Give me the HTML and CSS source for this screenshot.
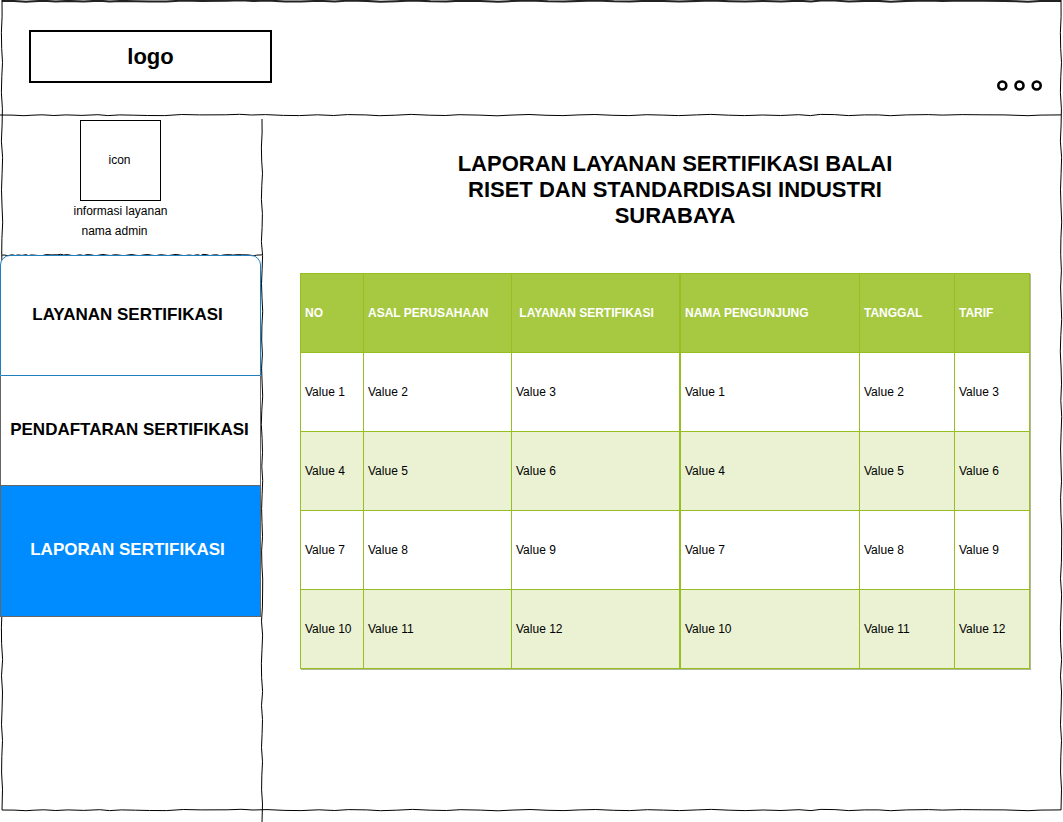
FILE: index.html
```
<!DOCTYPE html>
<html lang="id">
<head>
<meta charset="utf-8">
<meta name="viewport" content="width=device-width, initial-scale=1">
<title>Laporan Sertifikasi</title>
<link rel="stylesheet" href="styles.css">
</head>
<body>
<svg class="defs" aria-hidden="true">
  <symbol id="line-h" viewBox="0 0 1063 4" preserveAspectRatio="none">
    <path vector-effect="non-scaling-stroke" d="M0 2 12 2.1 24 2.7 32 2.2 42 1.8 54 2.5 66 1.9 82 2.4 98 1.7 108 2.6 120 1.9 134 2.2 148 2.5 165 2.6 182 1.5 200 1.9 226 1.8 240 1.3 252 2 266 1.6 284 2.4 300 2.6 318 1.8 334 2.5 348 1.6 366 1.9 380 2.7 396 2.2 412 1.4 430 2.2 446 2.5 460 1.7 480 2.1 498 2.8 512 2.1 530 1.5 548 2.3 564 2.6 580 1.9 596 1.5 614 2.3 630 2.6 648 1.7 664 2.1 680 2.6 698 1.9 712 1.4 730 2.2 746 2.6 764 2 782 2.5 800 1.7 812 2.6 822 1.4 836 1.6 850 2.6 866 1.9 880 1.9 892 2.7 908 1.9 930 1.6 944 2.1 964 1.6 984 1.8 1006 1.9 1030 2.7 1042 2.1 1063 1.9"/>
  </symbol>
  <symbol id="line-v" viewBox="0 0 4 700" preserveAspectRatio="none">
    <path vector-effect="non-scaling-stroke" d="M2 0 2.1 14 1.4 28 1.7 42 2.5 54 1.8 66 1.4 80 2.4 94 2.1 108 1.4 122 2.6 136 2.1 150 1.5 164 2 178 2.7 192 1.9 206 1.7 220 2.4 234 1.6 248 2.1 262 2.7 276 1.8 290 1.3 304 2.1 318 2.5 332 1.8 346 2.7 360 2.1 374 1.6 388 2 402 2.5 416 1.6 430 1.9 444 2.7 458 2.6 472 2.4 486 1.5 500 2.6 514 2 528 1.4 542 1.6 556 2.6 570 1.5 584 2.5 598 2.1 612 1.5 626 2.5 640 1.8 654 1.6 668 2.5 682 2 700"/>
  </symbol>
</svg>

<div class="page">
  <svg class="line line-top" aria-hidden="true"><use href="#line-h"/></svg>
  <svg class="line line-left" aria-hidden="true"><use href="#line-v"/></svg>
  <svg class="line line-right" aria-hidden="true"><use href="#line-v"/></svg>
  <svg class="line line-bottom" aria-hidden="true"><use href="#line-h"/></svg>

  <header class="header">
    <div class="logo">logo</div>
    <button class="more" type="button" aria-label="Menu">
      <svg width="46" height="12" viewBox="0 0 46 12" aria-hidden="true">
        <circle cx="5.3" cy="5.5" r="4"/>
        <circle cx="22.5" cy="5.5" r="4"/>
        <circle cx="39.7" cy="5.5" r="4"/>
      </svg>
    </button>
    <svg class="line line-header" aria-hidden="true"><use href="#line-h"/></svg>
  </header>

  <div class="body">
    <aside class="sidebar">
      <svg class="line line-side" aria-hidden="true"><use href="#line-v"/></svg>
      <div class="profile">
        <div class="avatar">icon</div>
        <p class="info">informasi layanan</p>
        <p class="info info-name">nama admin</p>
        <svg class="line line-profile" aria-hidden="true"><use href="#line-h"/></svg>
      </div>
      <nav class="menu">
        <a class="item item-outlined" href="#layanan">LAYANAN SERTIFIKASI</a>
        <a class="item item-plain" href="#pendaftaran">PENDAFTARAN SERTIFIKASI</a>
        <a class="item item-active" href="#laporan" aria-current="page">LAPORAN SERTIFIKASI</a>
      </nav>
    </aside>

    <main class="main">
      <h1 class="title">LAPORAN LAYANAN SERTIFIKASI BALAI RISET DAN STANDARDISASI INDUSTRI SURABAYA</h1>
      <table class="report">
        <colgroup>
          <col class="col-no"><col class="col-company"><col class="col-service"><col class="col-visitor"><col class="col-date"><col class="col-fee">
        </colgroup>
        <thead>
          <tr><th>NO</th><th>ASAL PERUSAHAAN</th><th>&nbsp;LAYANAN SERTIFIKASI</th><th>NAMA PENGUNJUNG</th><th>TANGGAL</th><th>TARIF</th></tr>
        </thead>
        <tbody>
          <tr><td>Value 1</td><td>Value 2</td><td>Value 3</td><td>Value 1</td><td>Value 2</td><td>Value 3</td></tr>
          <tr><td>Value 4</td><td>Value 5</td><td>Value 6</td><td>Value 4</td><td>Value 5</td><td>Value 6</td></tr>
          <tr><td>Value 7</td><td>Value 8</td><td>Value 9</td><td>Value 7</td><td>Value 8</td><td>Value 9</td></tr>
          <tr><td>Value 10</td><td>Value 11</td><td>Value 12</td><td>Value 10</td><td>Value 11</td><td>Value 12</td></tr>
        </tbody>
      </table>
    </main>
  </div>
</div>
</body>
</html>
```
FILE: styles.css
```
* { box-sizing: border-box; }

body {
  margin: 0;
  background: #fff;
  color: #000;
  font-family: "Liberation Sans", Arial, sans-serif;
  font-size: 12px;
}

.defs {
  position: absolute;
  width: 0;
  height: 0;
}

.page {
  position: relative;
  display: flex;
  flex-direction: column;
  min-height: 100vh;
}

/* Hand-drawn rules laid over the frame */
.line {
  position: absolute;
  fill: none;
  stroke: #000;
  stroke-width: 1px;
  pointer-events: none;
}
.line-top { top: -1px; left: 2px; width: calc(100% - 4px); height: 4px; stroke-width: 2px; stroke: #222; }
.line-bottom { bottom: 10px; left: 2px; width: calc(100% - 4px); height: 4px; }
.line-left { top: 0; left: 0; width: 4px; height: calc(100% - 12px); }
.line-right { top: 0; right: 0; width: 4px; height: calc(100% - 12px); }
.line-header { bottom: -1px; left: 0; width: calc(100% - 2px); height: 4px; }
.line-side { top: 3px; right: -2px; width: 4px; height: calc(100% - 3px); }
.line-profile { bottom: -2px; left: 2px; width: calc(100% - 2px); height: 4px; }

.header {
  position: relative;
  display: flex;
  justify-content: space-between;
  align-items: flex-start;
  padding: 30px 20px 24px 29px;
}

.logo {
  width: 243px;
  padding: 12px;
  border: 2px solid #000;
  font-size: 22px;
  font-weight: bold;
  line-height: 25px;
  text-align: center;
}

.more {
  display: flex;
  margin-top: 50px;
  padding: 0;
  border: 0;
  background: none;
  cursor: pointer;
}
.more svg { fill: none; stroke: #000; stroke-width: 2.6px; }

.body {
  display: flex;
  flex: 1;
}

.sidebar {
  position: relative;
  flex: none;
  width: 262px;
}

.profile {
  position: relative;
  display: flex;
  flex-direction: column;
  align-items: center;
  padding: 4px 21px 14px 0;
}

.avatar {
  width: 81px;
  padding: 30px 2px 30px 0;
  border: 1px solid #000;
  line-height: 19px;
  text-align: center;
}

.info {
  margin: 0;
  line-height: 20px;
}
.info-name { padding-right: 12px; }

.menu {
  position: relative;
  display: flex;
  flex-direction: column;
  margin-right: 1px;
}

.item {
  padding: 0 6px 2px 0;
  border: 1px solid #666;
  border-top: 0;
  background: #fff;
  color: #000;
  font-size: 17px;
  font-weight: bold;
  text-align: center;
  text-decoration: none;
  white-space: nowrap;
}
.item-outlined {
  border: 1px solid #1f7fc1;
  border-radius: 10px 10px 0 0;
  line-height: 117px;
}
.item-plain { padding-right: 2px; line-height: 107px; }
.item-active {
  background: #008cff;
  color: #fff;
  line-height: 128px;
}

.main {
  flex: 1;
  min-width: 0;
  padding: 35px 33px 40px 38px;
}

.title {
  max-width: 460px;
  margin: 0 auto 44px;
  padding-left: 20px;
  font-size: 22px;
  font-weight: bold;
  line-height: 26px;
  text-align: center;
}

.report {
  width: 100%;
  table-layout: fixed;
  border-collapse: separate;
  border-spacing: 0;
  border: solid #98bf21;
  border-width: 0 1px 1px 0;
  box-shadow: 1px 1px 0 #b0b89c;
}
.col-no { width: 63px; }
.col-company { width: 148px; }
.col-service { width: 168px; }
.col-visitor { width: 180px; }
.col-date { width: 95px; }
.col-fee { width: 75px; }

.report th,
.report td {
  height: 79px;
  padding: 0 0 0 4px;
  border: solid #98bf21;
  border-width: 1px 0 0 1px;
  text-align: left;
  vertical-align: middle;
  white-space: nowrap;
}
.report th:nth-child(4),
.report td:nth-child(4) { border-left-width: 2px; }
.report th {
  background: #a7c942;
  color: #fff;
}
.report tbody tr:nth-child(even) { background: #eaf2d3; }
```
